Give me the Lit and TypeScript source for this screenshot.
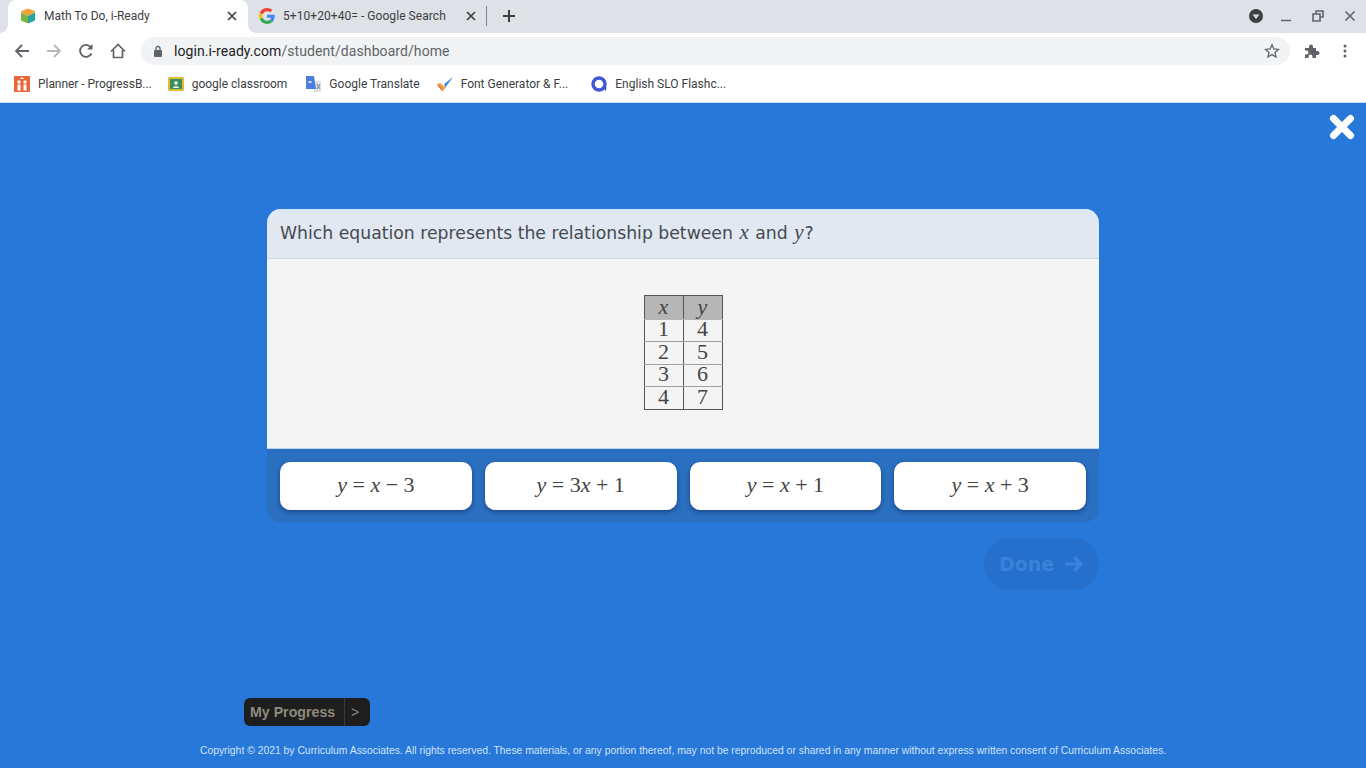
import { LitElement, html, css, svg } from "lit";
import { customElement } from "lit/decorators.js";

const cube = html`<svg class="fav" viewBox="0 0 16 16"><path d="M8 0.500 14.500 3 15 4.500 8 8 1 4.500 1.500 3Z" fill="#f2a33a"/><path d="M1 4.500 8 8V15.500L2 13 1 12Z" fill="#7cb342"/><path d="M15 4.500 8 8V15.500L14 13 15 12Z" fill="#26a69a"/></svg>`;
const gLogo = html`<svg class="fav" viewBox="0 0 48 48"><path fill="#EA4335" d="M24 9.500c3.500 0 6.700 1.200 9.200 3.600l6.900-6.900C35.900 2.400 30.500 0 24 0 14.600 0 6.500 5.400 2.600 13.200l8 6.200C12.500 13.600 17.800 9.500 24 9.500z"/><path fill="#4285F4" d="M47 24.500c0-1.600-.1-3.100-.4-4.500H24v9h12.900c-.6 3-2.200 5.500-4.700 7.200l7.700 6c4.500-4.200 7.100-10.300 7.100-17.700z"/><path fill="#FBBC05" d="M10.600 28.600A14.500 14.500 0 0 1 10.600 19.400l-8-6.200a24 24 0 0 0 0 21.600z"/><path fill="#34A853" d="M24 48c6.500 0 11.900-2.100 15.900-5.800l-7.700-6c-2.200 1.400-4.900 2.300-8.200 2.300-6.200 0-11.500-4.200-13.400-9.900l-8 6.200C6.500 42.600 14.600 48 24 48z"/></svg>`;
const closeX = html`<svg class="tabx" viewBox="0 0 10 10"><path d="M1 1 9 9M9 1 1 9" stroke="#3c4043" stroke-width="1.700" fill="none"/></svg>`;

const bookmarks = [
  { t: "Planner - ProgressB...", c: "first", i: svg`<rect width="16" height="16" rx="1" fill="#e8663a"/><circle cx="5" cy="6" r="1.700" fill="#fff"/><circle cx="11" cy="6" r="1.700" fill="#fff"/><path d="M3.500 8.500h3v6h-3zM9.500 8.500h3v6h-3z" fill="#fff"/><path d="M8 1 10 3H6Z" fill="#fff"/>` },
  { t: "google classroom", c: "", i: svg`<rect y="1" width="16" height="14" rx="1" fill="#e6b93a"/><rect x="2" y="3" width="12" height="10" fill="#3a8f55"/><circle cx="8" cy="7" r="1.800" fill="#fff"/><path d="M5 12c0-2.500 6-2.500 6 0Z" fill="#fff"/>` },
  { t: "Google Translate", c: "third", i: svg`<path d="M8 5h8v11H9Z" fill="#dfe3e8"/><path d="M1 0h8l2 13H1Z" fill="#4a7fe0"/><path d="M12 8l3 5M15 8l-3 5" stroke="#777" stroke-width="1"/><path d="M3.500 6h3" stroke="#fff" stroke-width="1.500"/>` },
  { t: "Font Generator & F...", c: "fourth", i: svg`<path d="M0 8 6 15 8 11 3 7Z" fill="#f2a03a"/><path d="M6 15 16 1 7 8 8 11Z" fill="#4a90e2"/><path d="M0 9 5 15 6 15 3 10Z" fill="#e8663a"/>` },
  { t: "English SLO Flashc...", c: "last", i: svg`<circle cx="8" cy="8" r="6" fill="none" stroke="#4257d6" stroke-width="3.400"/><path d="M11 11 15 15 15.500 11Z" fill="#4257d6"/>` },
];

const rows = [[1, 4], [2, 5], [3, 6], [4, 7]];

const m = (s: string) => html`<i>${s}</i>`;

const answers = [
  html`${m("y")}<span class="op">=</span>${m("x")}<span class="op">−</span>3`,
  html`${m("y")}<span class="op">=</span>3${m("x")}<span class="op">+</span>1`,
  html`${m("y")}<span class="op">=</span>${m("x")}<span class="op">+</span>1`,
  html`${m("y")}<span class="op">=</span>${m("x")}<span class="op">+</span>3`,
];

@customElement("app-root")
export class AppRoot extends LitElement {
  static styles = css`
    :host { display: flex; flex-direction: column; width: 1366px; height: 768px; overflow: hidden; font-family: Roboto, "Liberation Sans", sans-serif; position: relative; }
    .tabs { height: 33px; background: #dee1e6; display: flex; align-items: stretch; padding-left: 8px; flex: none; }
    .tab { width: 240px; box-sizing: border-box; display: flex; align-items: center; gap: 8px; padding: 0 11px 2px 12px; font-size: 12px; color: #3c4043; position: relative; }
    .tab.active { background: #fff; border-radius: 8px 8px 0 0; }
    .tab.active::before, .tab.active::after { content: ""; position: absolute; bottom: 0; width: 8px; height: 8px; }
    .tab.active::before { left: -8px; background: radial-gradient(circle at 0 0, #dee1e6 7.500px, #fff 8px); }
    .tab.active::after { right: -8px; background: radial-gradient(circle at 100% 0, #dee1e6 7.500px, #fff 8px); }
    .tab.second { width: 238px; padding: 0 10px 2px 11px; letter-spacing: 0.06px; }
    .tab span { flex: 1; white-space: nowrap; overflow: hidden; }
    .fav { width: 16px; height: 16px; flex: none; }
    .tabx { width: 10px; height: 10px; flex: none; }
    .sep { width: 1px; height: 20px; background: #80868b; align-self: center; flex: none; margin-bottom: 2px; }
    .plus { width: 12px; height: 12px; margin: 0 0 2px 16px; align-self: center; flex: none; }
    .winbar { margin-left: auto; display: flex; align-items: center; padding: 0 0 2px 0; }
    .win { width: 32px; height: 14px; display: flex; align-items: center; justify-content: center; }
    .win.menu { width: 28px; }
    .win svg { width: 14px; height: 14px; }
    .toolbar { height: 36px; background: #fff; display: flex; align-items: center; flex: none; padding-left: 14px; }
    .nav { width: 16px; height: 16px; margin-right: 16px; flex: none; }
    .omni { margin-left: -1px; width: 1149px; height: 28px; border-radius: 14px; background: #f1f3f4; display: flex; align-items: center; padding-left: 12px; box-sizing: border-box; font-size: 14px; letter-spacing: 0.08px; color: #202124; flex: none; }
    .omni .lock { width: 10px; height: 12px; margin-right: 11px; flex: none; }
    .omni .path { color: #5f6368; }
    .omni .url { flex: 1; }
    .omni .star { width: 16px; height: 16px; margin-right: 10px; }
    .ext { width: 16px; height: 16px; margin-left: 14px; flex: none; }
    .dots { width: 4px; height: 14px; margin-left: 23px; flex: none; }
    .bookmarks { height: 30px; padding: 0 0 3px 14px; background: #fff; display: flex; align-items: center; gap: 16px; font-size: 12px; color: #3c4043; flex: none; border-bottom: 1px solid #c9def2; }
    .bm { display: flex; align-items: center; gap: 8px; white-space: nowrap; }
    .bm.first { letter-spacing: -0.05px; }
    .bm.third { margin-left: 2px; }
    .bm.fourth { margin-left: 1px; }
    .bm.last { margin-left: 7px; }
    .bm svg { width: 16px; height: 16px; flex: none; }
    main { flex: 1; background: #2778d9; display: flex; flex-direction: column; align-items: center; position: relative; }
    .close { position: absolute; right: 11px; top: 11px; width: 26px; height: 26px; }
    .card { width: 832px; margin-top: 106px; border-radius: 14px; display: flex; flex-direction: column; overflow: hidden; }
    .q { height: 50px; box-sizing: border-box; background: #e1e8f2; border-top: 3px solid #d9e8f8; border-bottom: 1px solid #d6dbe0; display: flex; align-items: center; padding: 0 0 5px 13px; font-family: "DejaVu Sans", sans-serif; font-size: 17.250px; color: #454a50; white-space: pre; }
    .q i { font-family: "Liberation Serif", serif; font-size: 21px; padding: 0 1px; }
    .body { height: 190px; background: #f4f4f4; display: flex; justify-content: center; padding-top: 36px; box-sizing: border-box; border-bottom: 1px solid #b9d4f1; }
    table { border-collapse: collapse; width: 79px; height: 115px; font-family: "Liberation Serif", serif; font-size: 22px; color: #444; table-layout: fixed; }
    td, th { border: 1px solid #555; border-top-color: #a0a0a0; border-bottom-color: #a0a0a0; text-align: center; padding: 0 0 4px; font-weight: 400; line-height: 17px; height: 17px; }
    th { background: #b6b6b6; font-style: italic; border-color: #555; border-bottom-color: #b6b6b6; height: 20px; padding-bottom: 2px; }
    tr:last-child td { border-bottom-color: #555; }
    .answers { height: 73px; box-sizing: border-box; background: #2b6fc0; display: flex; gap: 13px; padding: 13px; }
    .ans { flex: 1; height: 48px; background: #fff; border-radius: 10px; box-shadow: 0 2px 4px rgba(10,40,90,.55); display: flex; align-items: center; justify-content: center; font-family: "Liberation Serif", serif; font-size: 22px; color: #444; padding-bottom: 2px; box-sizing: border-box; }
    .op { margin: 0 5.500px; }
    .doneRow { width: 832px; display: flex; justify-content: flex-end; margin-top: 16px; }
    .done { width: 115px; height: 52px; border-radius: 26px; background: #2570cc; color: #3b82d8; display: flex; align-items: center; justify-content: center; gap: 10px; font-family: "DejaVu Sans", sans-serif; font-weight: 700; font-size: 19px; }
    .done svg { width: 20px; height: 18px; }
    .progRow { width: 1122px; margin-top: 108px; display: flex; box-sizing: border-box; padding-left: 122px; }
    .prog { height: 28px; background: #1e1e1e; border-radius: 6px; display: flex; align-items: center; color: #8e8a7e; font-family: "Liberation Sans", sans-serif; font-weight: 700; font-size: 14.200px; padding-left: 6px; width: 126px; box-sizing: border-box; }
    .prog .lab { width: 94px; white-space: nowrap; }
    .prog .arr { border-left: 1px solid #3a3a3a; height: 28px; display: flex; align-items: center; padding-left: 6px; font-weight: 400; }
    .copy { margin-top: 19px; font-family: "Liberation Sans", sans-serif; font-size: 10.360px; color: #d0e3f8; white-space: nowrap; text-align: center; }
  `;

  render() {
    return html`
      <div class="tabs">
        <div class="tab active">${cube}<span>Math To Do, i-Ready</span>${closeX}</div>
        <div class="tab second">${gLogo}<span>5+10+20+40= - Google Search</span>${closeX}</div>
        <div class="sep"></div>
        <svg class="plus" viewBox="0 0 12 12"><path d="M6 0V12M0 6H12" stroke="#3c4043" stroke-width="2" fill="none"/></svg>
        <div class="winbar">
          <div class="win menu"><svg viewBox="0 0 14 14"><circle cx="7" cy="7" r="7" fill="#3c4043"/><path d="M3.500 5.500h7L7 10Z" fill="#dee1e6"/></svg></div>
          <div class="win"><svg viewBox="0 0 14 14"><path d="M2 11.500H12" stroke="#5f6368" stroke-width="1.500"/></svg></div>
          <div class="win"><svg viewBox="0 0 14 14"><path d="M5 5V2H12V8H9M2 5H9V12H2Z" fill="none" stroke="#5f6368" stroke-width="1.600"/></svg></div>
          <div class="win"><svg viewBox="0 0 14 14"><path d="M2.500 2.500 11.500 11.500M11.500 2.500 2.500 11.500" stroke="#5f6368" stroke-width="1.600"/></svg></div>
        </div>
      </div>
      <div class="toolbar">
        <svg class="nav" viewBox="0 0 16 16"><path d="M15 8H2M8 2 2 8 8 14" fill="none" stroke="#5f6368" stroke-width="1.800"/></svg>
        <svg class="nav" viewBox="0 0 16 16"><path d="M1 8H14M8 2 14 8 8 14" fill="none" stroke="#b5b8bc" stroke-width="1.800"/></svg>
        <svg class="nav" viewBox="0 0 16 16"><path d="M13.500 10.500A6 6 0 1 1 13 4.500" fill="none" stroke="#5f6368" stroke-width="1.800"/><path d="M14.500 1V6.500H9Z" fill="#5f6368"/></svg>
        <svg class="nav" viewBox="0 0 16 16"><path d="M1 8.500 8 1.500 15 8.500M3.500 7V14.500H12.500V7" fill="none" stroke="#5f6368" stroke-width="1.700"/></svg>
        <div class="omni">
          <svg class="lock" viewBox="0 0 10 12"><rect x="1" y="5" width="8" height="7" rx="1" fill="#5f6368"/><path d="M3 5V3.500a2 2 0 0 1 4 0V5" fill="none" stroke="#5f6368" stroke-width="1.300"/></svg>
          <span class="url">login.i-ready.com<span class="path">/student/dashboard/home</span></span>
          <svg class="star" viewBox="0 0 16 16"><path d="M8 1.800 9.800 6 14.500 6.400 11 9.400 12 14 8 11.600 4 14 5 9.400 1.500 6.400 6.200 6Z" fill="none" stroke="#5f6368" stroke-width="1.300"/></svg>
        </div>
        <svg class="ext" viewBox="0 0 16 16"><path d="M1 5H5V3.500a2 2 0 0 1 4 0V5H12V8H13.500a2 2 0 0 1 0 4H12V15H8.500V13.500a2 2 0 0 0-4 0V15H1V11.500H2.500a2 2 0 0 0 0-4H1Z" fill="#5f6368"/></svg>
        <svg class="dots" viewBox="0 0 4 14"><circle cx="2" cy="2" r="1.500" fill="#5f6368"/><circle cx="2" cy="7" r="1.500" fill="#5f6368"/><circle cx="2" cy="12" r="1.500" fill="#5f6368"/></svg>
      </div>
      <div class="bookmarks">
        ${bookmarks.map((b) => html`<div class="bm ${b.c}"><svg viewBox="0 0 16 16">${b.i}</svg>${b.t}</div>`)}
      </div>
      <main>
        <svg class="close" viewBox="0 0 26 26"><path d="M4.500 4.500 21.500 21.500M21.500 4.500 4.500 21.500" stroke="#fff" stroke-width="7" stroke-linecap="round"/></svg>
        <div class="card">
          <div class="q">Which equation represents the relationship between <i>x</i> and <i>y</i>?</div>
          <div class="body">
            <table>
              <tr><th>x</th><th>y</th></tr>
              ${rows.map((r) => html`<tr><td>${r[0]}</td><td>${r[1]}</td></tr>`)}
            </table>
          </div>
          <div class="answers">
            ${answers.map((a) => html`<div class="ans">${a}</div>`)}
          </div>
        </div>
        <div class="doneRow">
          <div class="done">Done<svg viewBox="0 0 20 18"><path d="M1 9H17M10 2 17 9 10 16" fill="none" stroke="#3b82d8" stroke-width="3.400"/></svg></div>
        </div>
        <div class="progRow">
          <div class="prog"><span class="lab">My Progress</span><span class="arr">&gt;</span></div>
        </div>
        <div class="copy">Copyright © 2021 by Curriculum Associates. All rights reserved. These materials, or any portion thereof, may not be reproduced or shared in any manner without express written consent of Curriculum Associates.</div>
      </main>
    `;
  }
}
